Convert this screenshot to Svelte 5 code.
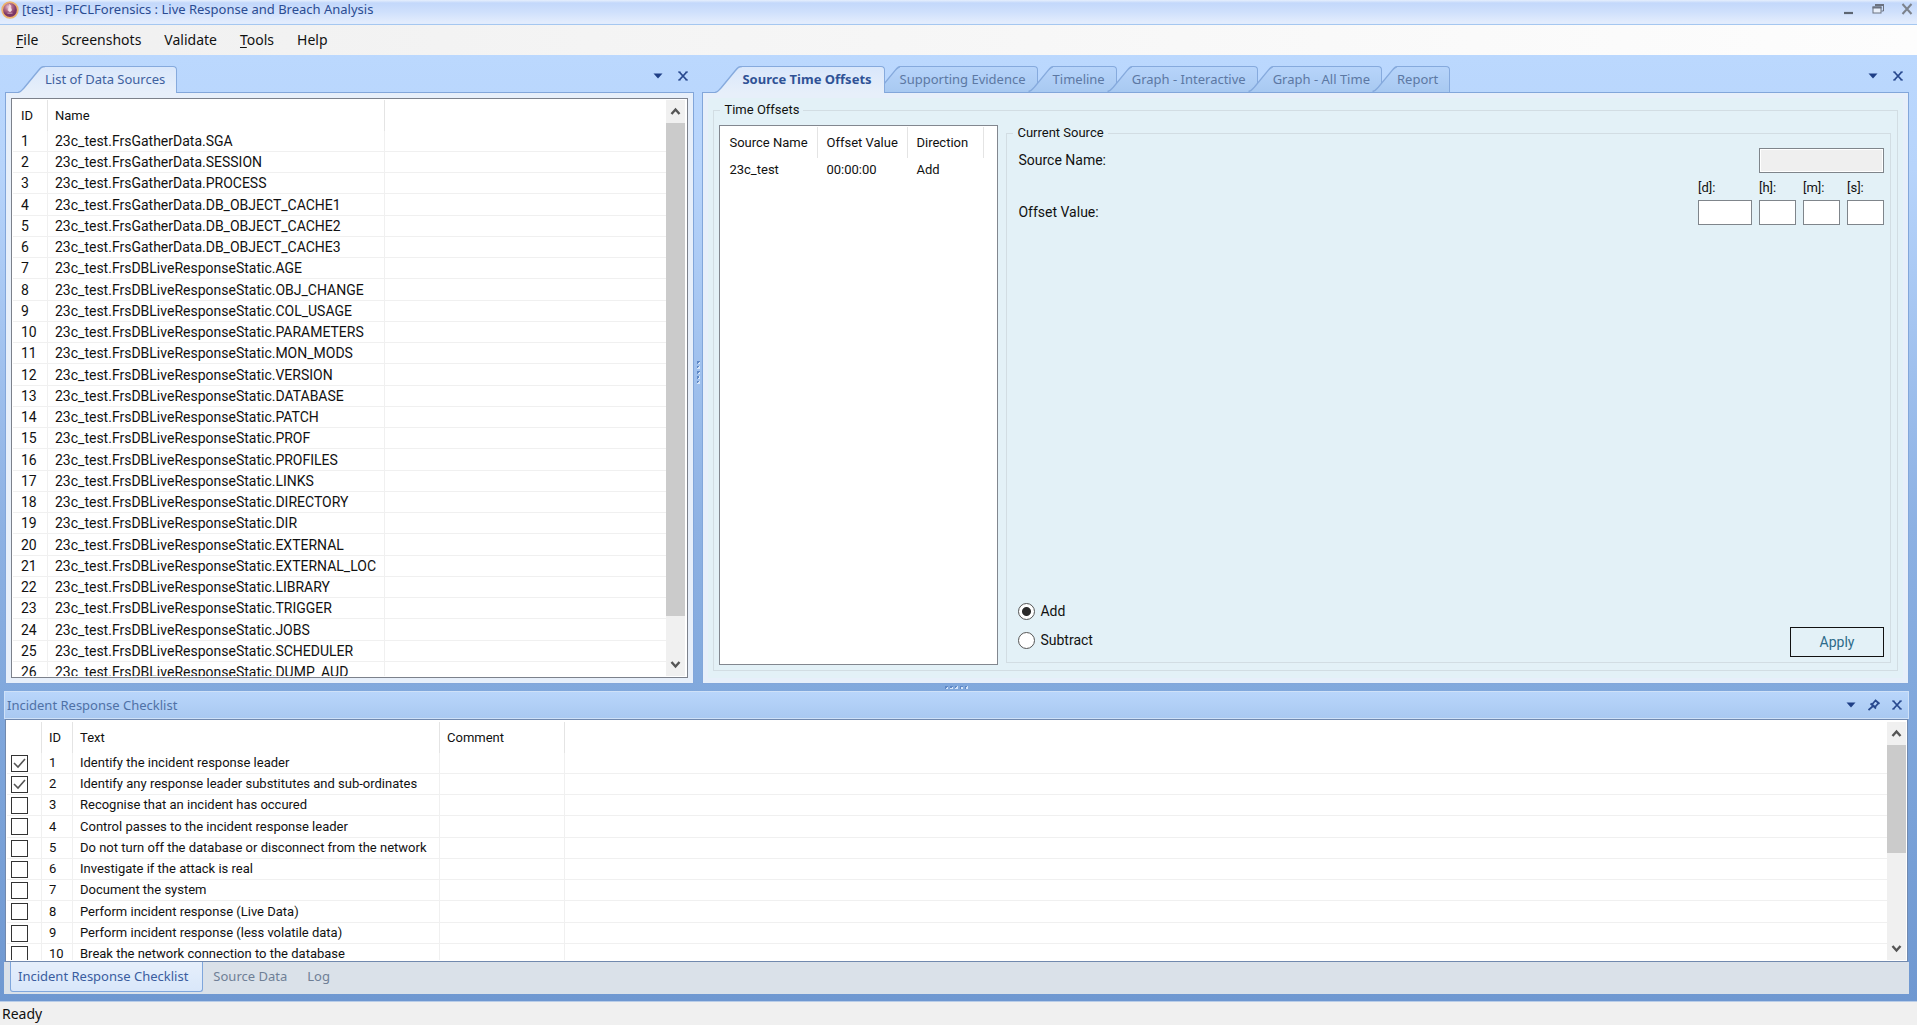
<script>
  const menus = [
    { key: 'F', rest: 'ile' },
    { key: '', rest: 'Screenshots' },
    { key: '', rest: 'Validate' },
    { key: 'T', rest: 'ools' },
    { key: '', rest: 'Help' }
  ];
  const live = 'FrsDBLiveResponseStatic.';
  const gather = 'FrsGatherData.';
  const sources = [
    ...['SGA', 'SESSION', 'PROCESS', 'DB_OBJECT_CACHE1', 'DB_OBJECT_CACHE2', 'DB_OBJECT_CACHE3'].map((n) => gather + n),
    ...['AGE', 'OBJ_CHANGE', 'COL_USAGE', 'PARAMETERS', 'MON_MODS', 'VERSION', 'DATABASE', 'PATCH', 'PROF', 'PROFILES',
      'LINKS', 'DIRECTORY', 'DIR', 'EXTERNAL', 'EXTERNAL_LOC', 'LIBRARY', 'TRIGGER', 'JOBS', 'SCHEDULER', 'DUMP_AUD'].map((n) => live + n)
  ].map((n) => '23c_test.' + n);
  const tabs = ['Source Time Offsets', 'Supporting Evidence', 'Timeline', 'Graph - Interactive', 'Graph - All Time', 'Report'];
  const units = ['d', 'h', 'm', 's'];
  const bottomTabs = ['Incident Response Checklist', 'Source Data', 'Log'];
  let activeTab = $state('Source Time Offsets');
  let activeBottom = $state('Incident Response Checklist');
  let direction = $state('add');
  let checklist = $state([
    'Identify the incident response leader',
    'Identify any response leader substitutes and sub-ordinates',
    'Recognise that an incident has occured',
    'Control passes to the incident response leader',
    'Do not turn off the database or disconnect from the network',
    'Investigate if the attack is real',
    'Document the system',
    'Perform incident response (Live Data)',
    'Perform incident response (less volatile data)',
    'Break the network connection to the database'
  ].map((text, i) => ({ text, done: i < 2 })));
</script>

{#snippet dropIcon()}
  <svg width="10" height="6" viewBox="0 0 10 6"><path d="M0.5 0.5h9L5 5.5z" fill="#1f3f86" /></svg>
{/snippet}
{#snippet closeIcon()}
  <svg width="10" height="10" viewBox="0 0 10 10"><path d="M0 1h2.500M7.500 1H10M0 9h2.500M7.500 9H10" stroke="#28498f" stroke-width="1" /><path d="M1.300 1l7.400 8M8.700 1L1.300 9" fill="none" stroke="#28498f" stroke-width="1.800" /></svg>
{/snippet}
{#snippet tab(name, active, single)}
  <button class="tab" class:active class:single role="tab" aria-selected={active} onclick={() => { if (!single) activeTab = name; }}>
    <svg class="slant" width="27" height="27" viewBox="0 0 27 27">
      <defs>
        <linearGradient id="on" x1="0" y1="0" x2="0" y2="1"><stop offset="0" stop-color="#d9e7fb" /><stop offset="1" stop-color="#e7effa" /></linearGradient>
        <linearGradient id="off" x1="0" y1="0" x2="0" y2="1"><stop offset="0" stop-color="#b7d4fa" /><stop offset="1" stop-color="#a8c9f1" /></linearGradient>
      </defs>
      <path d="M0 27L0 26.5C3 26 4 24 6 22L20 5C23 1.5 24 0.5 27 0.5V27z" fill={active ? 'url(#on)' : 'url(#off)'} />
      <path d="M0 26.5C3 26 4 24 6 22L20 5C23 1.5 24 0.5 27 0.5" fill="none" stroke="#86aadd" stroke-width="1.4" />
    </svg>
    <span>{name}</span>
  </button>
{/snippet}
{#snippet scrollbar(kind)}
  <div class="scroll {kind}" aria-hidden="true">
    <svg class="arrow" width="19" height="23" viewBox="0 0 19 23"><path d="M5.5 14l4-4.5 4 4.5" fill="none" stroke="#555" stroke-width="2.4" /></svg>
    <div class="track"><div class="thumb"></div></div>
    <svg class="arrow" width="19" height="23" viewBox="0 0 19 23"><path d="M5.5 9l4 4.5 4-4.5" fill="none" stroke="#555" stroke-width="2.4" /></svg>
  </div>
{/snippet}
{#snippet grip(kind)}
  <div class="grip {kind}"><i></i><i></i><i></i><i></i><i></i></div>
{/snippet}

<div class="app">
  <header class="titlebar">
    <svg width="18" height="18" viewBox="0 0 18 18">
      <defs><radialGradient id="ball" cx="0.4" cy="0.3"><stop offset="0" stop-color="#e8c6d6" /><stop offset="0.5" stop-color="#b06a88" /><stop offset="1" stop-color="#7a3566" /></radialGradient></defs>
      <circle cx="9" cy="9" r="7.800" fill="url(#ball)" stroke="#edb26c" stroke-width="1.800" />
      <path d="M8.500 3.500c2 1.200.8 2.800 1.400 3.700C11 8.600 10.600 10.600 9 10.600 7.200 10.600 6.700 8.800 7.500 7.600 8.300 6.500 8.900 5.200 8.500 3.500zM6.500 12.200h5" fill="#f6dfe2" stroke="#f6dfe2" stroke-width="0.600" />
    </svg>
    <h1>[test] - PFCLForensics : Live Response and Breach Analysis</h1>
    <div class="winbuttons">
      <button aria-label="Minimise"><svg width="12" height="12" viewBox="0 0 12 12"><path d="M1 10h9" stroke="#5d6672" stroke-width="2.2" /></svg></button>
      <button aria-label="Restore"><svg width="12" height="12" viewBox="0 0 12 12"><path d="M3.500 3V1.500h8V8H9.500" fill="none" stroke="#6b7280" /><rect x="1" y="4" width="8" height="6" fill="#e8effa" stroke="#6b7280" /><path d="M0.500 4.500h9M3 2h9" stroke="#6b7280" stroke-width="2" /></svg></button>
      <button aria-label="Close"><svg width="12" height="12" viewBox="0 0 12 12"><path d="M1.500 1l9 10M10.500 1l-9 10" stroke="#7c828c" stroke-width="2" /></svg></button>
    </div>
  </header>

  <nav class="menubar">
    {#each menus as m}
      <button>{#if m.key}<u>{m.key}</u>{/if}{m.rest}</button>
    {/each}
  </nav>

  <main class="workspace">
    <div class="upper">
      <section class="pane">
        <div class="tabstrip">
          <div class="tabs" role="tablist">{@render tab('List of Data Sources', true, true)}</div>
          <div class="tools">
            <button aria-label="Pane menu">{@render dropIcon()}</button>
            <button aria-label="Close pane">{@render closeIcon()}</button>
          </div>
        </div>
        <div class="body">
          <div class="listview">
            <div class="rows">
              <table class="sources">
                <thead><tr><th class="c-id">ID</th><th class="c-name">Name</th><th></th></tr></thead>
                <tbody>
                  {#each sources as s, i}<tr><td>{i + 1}</td><td>{s}</td><td></td></tr>{/each}
                </tbody>
              </table>
            </div>
            {@render scrollbar('long')}
          </div>
        </div>
      </section>

      {@render grip('vertical')}

      <section class="pane">
        <div class="tabstrip">
          <div class="tabs" role="tablist">
            {#each tabs as t}{@render tab(t, t === activeTab, false)}{/each}
          </div>
          <div class="tools">
            <button aria-label="Pane menu">{@render dropIcon()}</button>
            <button aria-label="Close pane">{@render closeIcon()}</button>
          </div>
        </div>
        <div class="body">
          <div class="form">
            <fieldset class="offsets">
              <legend>Time Offsets</legend>
              <div class="offsetlist">
                <table>
                  <thead><tr><th class="c-src">Source Name</th><th class="c-off">Offset Value</th><th class="c-dir">Direction</th><th></th></tr></thead>
                  <tbody><tr><td>23c_test</td><td>00:00:00</td><td>Add</td><td></td></tr></tbody>
                </table>
              </div>
              <fieldset class="current">
                <legend>Current Source</legend>
                <div class="line">
                  <label class="caption" for="source-name">Source Name:</label>
                  <input id="source-name" class="readonly" type="text" readonly />
                </div>
                <div class="line values">
                  <span class="caption" id="offset-label">Offset Value:</span>
                  <div class="units" role="group" aria-labelledby="offset-label">
                    {#each units as u}
                      <div class="unit {u}"><label for="unit-{u}">[{u}]:</label><input id="unit-{u}" type="text" /></div>
                    {/each}
                  </div>
                </div>
                <div class="actions">
                  <div class="radios">
                    <label><input type="radio" value="add" bind:group={direction} />Add</label>
                    <label><input type="radio" value="subtract" bind:group={direction} />Subtract</label>
                  </div>
                  <button class="apply">Apply</button>
                </div>
              </fieldset>
            </fieldset>
          </div>
        </div>
      </section>
    </div>

    {@render grip('horizontal')}

    <section class="dock">
      <div class="dockhead">
        <h2>Incident Response Checklist</h2>
        <div class="tools">
          <button aria-label="Dock menu">{@render dropIcon()}</button>
          <button aria-label="Pin"><svg width="12" height="12" viewBox="0 0 12 12"><path d="M4 5.500L7.500 1.500l3 2.500L7 8zM2.500 4.500l5.500 5M4.500 7.500L0.500 11M7 1l4.500 3.800" fill="none" stroke="#28498f" stroke-width="1.700" /></svg></button>
          <button aria-label="Close dock">{@render closeIcon()}</button>
        </div>
      </div>
      <div class="docklist">
        <div class="rows">
          <table class="checks">
            <thead><tr><th class="c-check"></th><th class="c-num">ID</th><th class="c-text">Text</th><th class="c-comment">Comment</th><th></th></tr></thead>
            <tbody>
              {#each checklist as c, i}
                <tr><td><input type="checkbox" aria-label={c.text} bind:checked={c.done} /></td><td>{i + 1}</td><td>{c.text}</td><td></td><td></td></tr>
              {/each}
            </tbody>
          </table>
        </div>
        {@render scrollbar('short')}
      </div>
      <div class="docktabs" role="tablist">
        {#each bottomTabs as t}
          <button role="tab" aria-selected={t === activeBottom} class:active={t === activeBottom} onclick={() => (activeBottom = t)}>{t}</button>
        {/each}
      </div>
    </section>
  </main>

  <footer>Ready</footer>
</div>

<style>
  :global(body) { margin: 0; }
  .app {
    display: flex; flex-direction: column; height: 100vh; overflow: hidden;
    font: 13px/16px Roboto, "Liberation Sans", sans-serif; color: #111;
  }
  .app * { box-sizing: border-box; }
  button { font: inherit; color: inherit; background: none; border: 0; padding: 0; margin: 0; }
  svg { display: block; flex: none; }
  h1, h2 { margin: 0; font: 13px/16px "Noto Sans", "Open Sans", sans-serif; }

  .titlebar {
    display: flex; flex: none; align-items: flex-start; height: 25px; padding: 1px 4px 0 1px; gap: 3px;
    background: linear-gradient(#e6effd 0, #c3d8fb 3px, #cfe0fc 12px, #e2ecfd 22px);
    border-bottom: 1px solid #a5c7f0; color: #2b4c92;
  }
  .winbuttons { display: flex; gap: 17px; margin-left: auto; padding: 2px 0; }

  .menubar {
    display: flex; flex: none; align-items: center; gap: 23px; height: 30px; padding: 0 16px;
    background: linear-gradient(90deg, #f0f0f0, #fdfdfd);
    font: 14px/20px "Noto Sans", "Open Sans", sans-serif;
  }
  u { text-underline-offset: 2px; }

  .workspace {
    display: flex; flex: 1; flex-direction: column; min-height: 0; padding: 11px 8px 7px 4px;
    background: linear-gradient(#bbd8fe 0, #b7d4fb 12%, #8db1e3 50%, #82a9dd 66%, #6f98d1 100%);
  }
  .upper { display: grid; flex: 1; grid-template-columns: minmax(0, 4fr) 8px minmax(0, 7fr); min-height: 0; padding-left: 1px; }
  .pane { display: flex; flex-direction: column; min-width: 0; min-height: 0; }
  .tabstrip { display: flex; flex: none; justify-content: space-between; height: 26px; padding: 0 6px 0 13px; }
  .tabs { display: flex; }
  .tools { display: flex; align-items: center; gap: 15px; }
  .tabstrip .tools { height: 20px; }

  .tab {
    position: relative; display: flex; height: 27px; margin-left: -10px; color: #5c78a3;
    font: 13px/26px "Noto Sans", "Open Sans", sans-serif; white-space: nowrap;
  }
  .tab:first-child { margin-left: 0; }
  .tab span {
    height: 26px; margin-left: -2px; padding: 0 11px 0 0; border: solid #86aadd; border-width: 1px 1px 0 0;
    border-top-right-radius: 4px; background: linear-gradient(#b7d4fa, #a8c9f1); line-height: 25px;
  }
  .tab .slant { height: 26px; }
  .tab.active { z-index: 1; color: #2f5296; font-weight: 700; }
  .tab.active span { height: 27px; padding-right: 12px; margin-left: 0; background: linear-gradient(#d9e7fb, #e7effa); }
  .tab.active .slant { height: 27px; }
  .tab.single { font-weight: 400; color: #40619f; }
  .tab.single span { padding-right: 11px; }

  .body {
    display: flex; flex: 1; min-height: 0; padding: 5px;
    border: 1px solid #82a6da; background: #e7effa;
  }
  .listview { display: flex; flex: 1; min-width: 0; padding: 1px 2px 1px 1px; border: 1px solid #7c818b; background: #fff; }
  .rows { flex: 1; min-width: 0; overflow: hidden; background: #fff; }

  table { width: 100%; border-collapse: separate; border-spacing: 0; table-layout: fixed; }
  th, td { height: 21px; padding: 0 0 0 8px; overflow: hidden; font-weight: 400; text-align: left; white-space: nowrap; }
  th { height: 31px; border-right: 1px solid #e4e4e4; }
  th:last-child, td:last-child { border-right: 0; }
  td { border-right: 1px solid #f0f0f0; border-bottom: 1px solid #f0f0f0; line-height: 18px; }
  tr:nth-child(4n) td { height: 22px; }
  .sources { font-size: 14px; }
  .sources th { font-size: 13px; }
  .sources th, .sources td { padding-left: 7px; }
  .c-id { width: 35px; }
  .c-name { width: 337px; }
  .sources .c-id, .sources td:first-child { padding-left: 8px; }

  .scroll { display: flex; flex: none; flex-direction: column; width: 19px; background: #f0f0f0; }
  .track { flex: 1; }
  .thumb { background: #cbcbcb; }
  .long .thumb { height: 93%; }
  .short .thumb { height: 56%; }
  .arrow { background: #f0f0f0; }

  .grip { display: flex; align-items: center; justify-content: center; gap: 2px; }
  .grip i { width: 3px; height: 3px; background: linear-gradient(135deg, #5f88c6 50%, #d5e4f8 50%); }
  .vertical { flex-direction: column; align-self: start; height: 560px; margin-top: 26px; }
  .horizontal { flex: none; height: 7px; }

  .form { display: flex; flex: 1; min-width: 0; padding: 4px 5px 7px 5px; background: #e3f1f7; }
  fieldset { min-width: 0; margin: 0; border: 1px solid #d2dde3; }
  legend { padding: 0 4px; }
  .offsets { display: grid; flex: 1; grid-template-columns: 279px minmax(0, 1fr); gap: 8px; padding: 7px 6px 5px 5px; }
  .offsets > legend { margin-left: 1px; }
  .offsetlist { padding: 1px; border: 1px solid #82878f; background: #fff; }
  .offsetlist td { border: 0; height: 23px; }
  .c-src { width: 97px; }
  .c-off { width: 90px; }
  .c-dir { width: 76px; }

  .current { display: flex; flex-direction: column; padding: 7px 6px 5px 11px; margin-bottom: 2px; }
  .current legend { margin-left: -5px; }
  .line { display: flex; justify-content: space-between; align-items: center; }
  .line input { height: 25px; padding: 2px 4px; border: 1px solid #7f858b; background: #fff; font: inherit; }
  .line .readonly { width: 125px; background: #efefef; box-shadow: inset 0 0 0 1px #fff; }
  .values { align-items: flex-end; padding-top: 7px; }
  .caption { font-size: 14px; line-height: 25px; }
  .units { display: flex; gap: 7px; }
  .unit { display: flex; flex-direction: column; gap: 4px; }
  .unit input { width: 37px; }
  .d input { width: 54px; }
  .actions { display: flex; align-items: flex-end; justify-content: space-between; margin-top: auto; }
  .radios { display: flex; flex-direction: column; gap: 12px; padding-bottom: 8px; }
  .radios label { display: flex; align-items: center; gap: 5px; height: 17px; font-size: 14px; line-height: 17px; }
  .radios input { width: 17px; height: 17px; margin: 0; appearance: none; border: 1px solid #555; border-radius: 50%; background: #fff; }
  .radios input:checked { background: radial-gradient(circle, #2b2b2b 4px, #fff 5px); }
  .apply { width: 94px; height: 30px; border: 1px solid #111; color: #2d6b8a; font-size: 14px; }

  .dock { display: flex; flex: none; flex-direction: column; height: 303px; }
  .dockhead {
    display: flex; flex: none; align-items: center; justify-content: space-between; height: 28px; padding: 0 6px 1px 2px;
    border: 1px solid #cfe1f8; background: linear-gradient(#b9d6fb, #a9c9f1); color: #4f71a6;
  }
  .dockhead .tools { gap: 12px; }
  .docklist {
    display: flex; flex: 1; min-height: 0; padding: 2px 1px 1px 1px; margin: 0 1px;
    border: 1px solid #7189ae; background: #fff;
  }
  .c-check { width: 35px; }
  .c-num { width: 31px; }
  .c-text { width: 367px; }
  .c-comment { width: 125px; }
  .checks th, .checks td { padding-left: 7px; }
  .checks td:first-child { padding-left: 4px; }
  .checks input {
    display: block; width: 17px; height: 17px; margin: 0; appearance: none; border: 1px solid #333; background: #fff;
  }
  .checks input:checked {
    background: #fff url('data:image/svg+xml,<svg xmlns="http://www.w3.org/2000/svg" viewBox="0 0 15 15"><path d="M2 7l4 4 7-8" fill="none" stroke="%23555" stroke-width="1.600"/></svg>');
  }
  .docktabs { display: flex; flex: none; height: 32px; padding: 0 6px 2px; background: #dae1e9; color: #6f7f96; font: 13px/28px "Noto Sans", "Open Sans", sans-serif; }
  .docktabs button { height: 30px; padding: 0 10px 2px; }
  .docktabs button.active {
    padding: 0 14px 1px 7px; border: 1px solid #7fa6dc; border-top: 0; border-radius: 0 0 3px 3px;
    background: linear-gradient(#e6effb, #d9e7fa); color: #3a5da0;
  }

  footer {
    flex: none; height: 24px; padding: 0 2px; border-top: 1px solid #b9cde8; background: #f0f0f0;
    font: 14px/24px "Noto Sans", "Open Sans", sans-serif;
  }
</style>
